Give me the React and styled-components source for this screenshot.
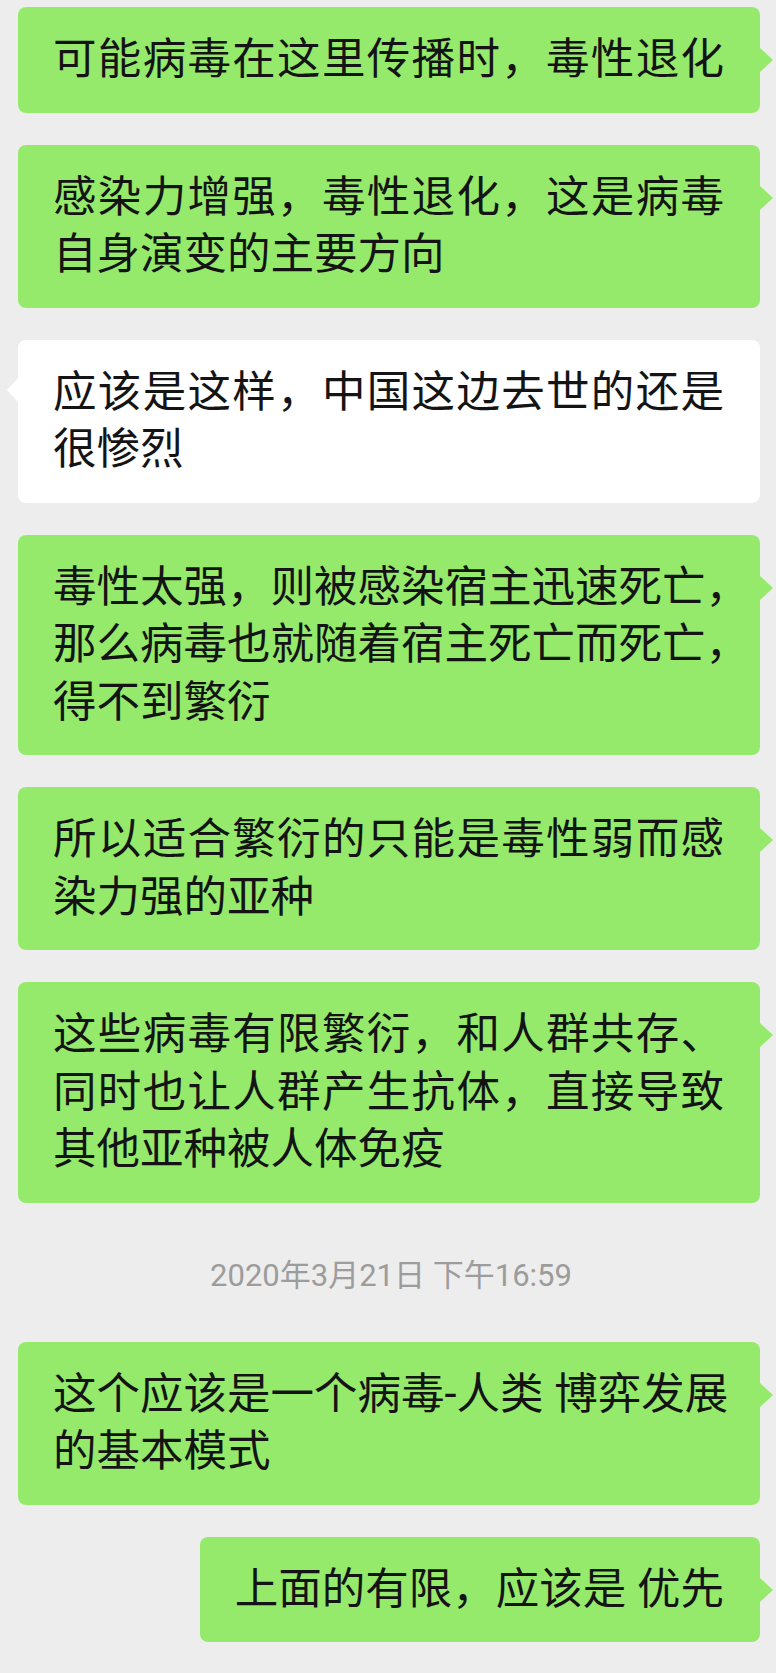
import React from "react";
import styled, { createGlobalStyle, css } from "styled-components";

const GlobalStyle = createGlobalStyle`
  html, body {
    margin: 0;
    padding: 0;
    background: #ededed;
  }
  body {
    font-family: "Roboto", "Noto Sans CJK SC", sans-serif;
  }
  * { box-sizing: border-box; }
`;

const GREEN = "#95ea6b";

const Chat = styled.main`
  display: flex;
  flex-direction: column;
  gap: 32px;
  padding: 7px 16px 31px 18px;
  width: 776px;
  min-height: 1673px;
  background: #ededed;
`;

const Row = styled.div`
  display: flex;
  justify-content: ${(p) => (p.$mine ? "flex-end" : "flex-start")};
`;

const Bubble = styled.div`
  position: relative;
  width: ${(p) => (p.$wide ? "742px" : "auto")};
  padding: 24px 36px 24px 35px;
  border-radius: 8px;
  background: ${(p) => (p.$mine ? GREEN : "#ffffff")};
  color: #141414;
  font-size: 43.5px;
  line-height: 57.5px;

  &::after {
    content: "";
    position: absolute;
    width: 0;
    height: 0;
    border-top: 13px solid transparent;
    border-bottom: 13px solid transparent;
    ${(p) =>
      p.$mine
        ? css`
            right: -13px;
            top: 40px;
            border-left: 14px solid ${GREEN};
          `
        : css`
            left: -11px;
            top: 37px;
            border-right: 12px solid #ffffff;
          `}
  }
`;

const Line = styled.span`
  display: block;
  white-space: nowrap;
  text-align: left;
  text-align-last: ${(p) => (p.$justify ? "justify" : "start")};
`;

const TimeDivider = styled.div`
  height: 75px;
  display: flex;
  align-items: center;
  justify-content: center;
  font-size: 31px;
  color: #9c9c9c;
  padding-left: 4px;
`;

const items = [
  { mine: true, wide: true, lines: ["可能病毒在这里传播时，毒性退化"] },
  { mine: true, lines: ["感染力增强，毒性退化，这是病毒", "自身演变的主要方向"] },
  { mine: false, lines: ["应该是这样，中国这边去世的还是", "很惨烈"] },
  {
    mine: true,
    lines: ["毒性太强，则被感染宿主迅速死亡，", "那么病毒也就随着宿主死亡而死亡，", "得不到繁衍"],
  },
  { mine: true, lines: ["所以适合繁衍的只能是毒性弱而感", "染力强的亚种"] },
  {
    mine: true,
    lines: ["这些病毒有限繁衍，和人群共存、", "同时也让人群产生抗体，直接导致", "其他亚种被人体免疫"],
  },
  { time: "2020年3月21日 下午16:59" },
  { mine: true, lines: ["这个应该是一个病毒-人类 博弈发展", "的基本模式"] },
  { mine: true, lines: ["上面的有限，应该是 优先"] },
];

function Message({ mine, wide, lines }) {
  const isWide = wide || lines.length > 1;
  return (
    <Row $mine={mine}>
      <Bubble $mine={mine} $wide={isWide}>
        {lines.map((l, i) => (
          <Line key={i} $justify={isWide && l.length === 15}>
            {l}
          </Line>
        ))}
      </Bubble>
    </Row>
  );
}

export default function App() {
  return (
    <>
      <GlobalStyle />
      <Chat>
        {items.map((it, i) =>
          it.time ? (
            <TimeDivider key={i}>{it.time}</TimeDivider>
          ) : (
            <Message key={i} {...it} />
          )
        )}
      </Chat>
    </>
  );
}
